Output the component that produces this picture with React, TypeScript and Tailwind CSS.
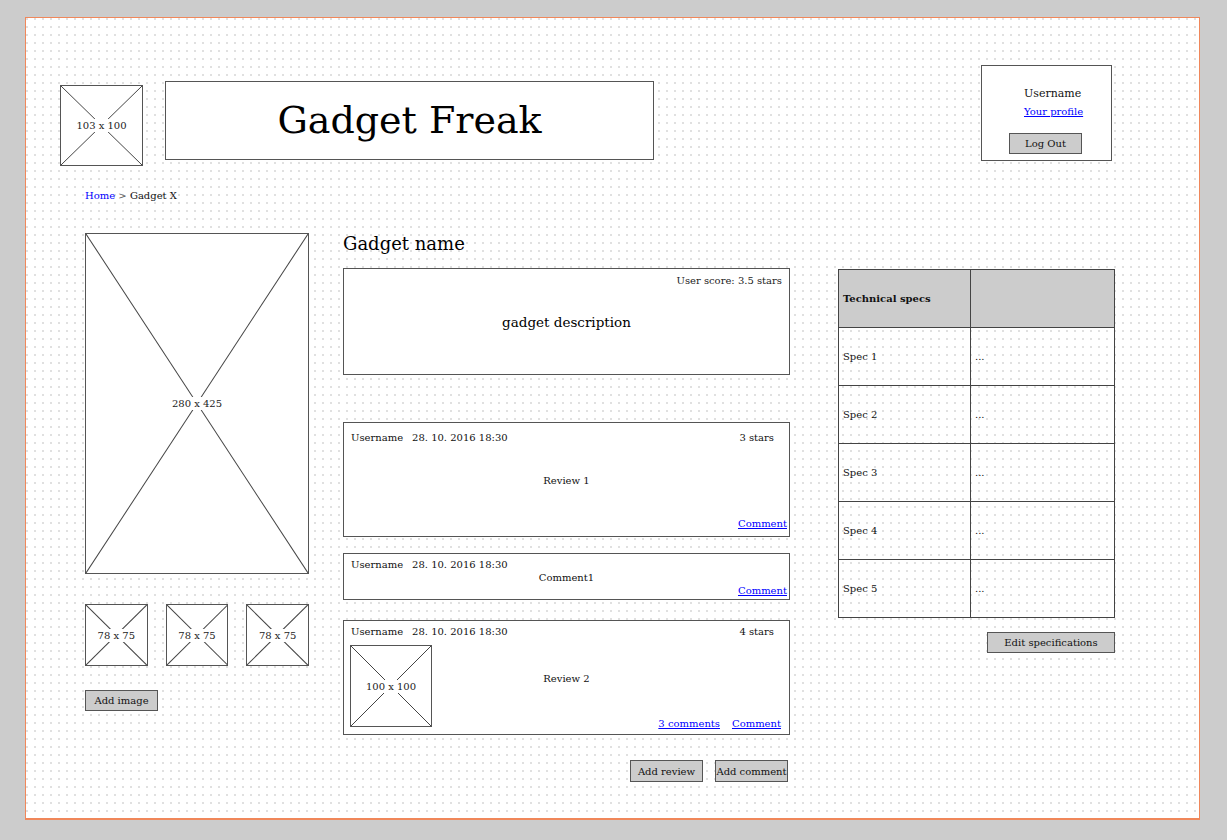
import React from "react";

function Ph({ className, label }: { className: string; label: string }) {
  return (
    <div className={"relative bg-white border border-[#555] flex items-center justify-center " + className}>
      <svg className="absolute inset-0 w-full h-full" viewBox="0 0 100 100" preserveAspectRatio="none">
        <line x1="0" y1="0" x2="100" y2="100" stroke="#444" strokeWidth="1" vectorEffect="non-scaling-stroke" />
        <line x1="100" y1="0" x2="0" y2="100" stroke="#444" strokeWidth="1" vectorEffect="non-scaling-stroke" />
      </svg>
      <span className="relative bg-white px-[2px] text-[10px] leading-[13px] text-[#222]">{label}</span>
    </div>
  );
}

function Btn({ className, children }: { className: string; children: React.ReactNode }) {
  return (
    <div className={"bg-[#cccccc] border border-[#555] flex items-center justify-center text-[10px] text-[#111] " + className}>
      {children}
    </div>
  );
}

function Link({ children }: { children: React.ReactNode }) {
  return <span className="text-[#0000ff] underline">{children}</span>;
}

function Meta() {
  return (
    <span>
      Username<span className="ml-[9px]">28. 10. 2016 18:30</span>
    </span>
  );
}

export default function App() {
  const specs = ["Spec 1", "Spec 2", "Spec 3", "Spec 4", "Spec 5"];
  return (
    <div className="w-[1227px] h-[840px] bg-[#cccccc] pt-[17px] pl-[25px] font-['DejaVu_Serif',serif] text-[#111]">
      <div className="w-[1175px] h-[803px] border border-[#f0875a] border-b-2 bg-white bg-[radial-gradient(circle_at_1px_1px,#e0e0e0_1px,transparent_0)] bg-[length:8px_8px]">
        {/* header */}
        <div className="pt-[47px] flex items-start">
          <Ph className="ml-[34px] mt-[20px] w-[83px] h-[81px]" label="103 x 100" />
          <div className="ml-[22px] mt-[16px] w-[489px] h-[79px] bg-white border border-[#555] flex items-center justify-center text-[38px] text-black">
            Gadget Freak
          </div>
          <div className="ml-auto mr-[87px] w-[131px] h-[96px] bg-white border border-[#555] flex flex-col items-start">
            <div className="pl-[42px] pt-[21px] text-[11px] leading-[14px]">Username</div>
            <div className="pl-[42px] mt-[4px] text-[10px] leading-[13px]">
              <Link>Your profile</Link>
            </div>
            <Btn className="ml-[27px] mt-[15px] w-[73px] h-[21px]">Log Out</Btn>
          </div>
        </div>

        {/* breadcrumb */}
        <div className="mt-[23px] pl-[59px] h-[13px] text-[10px] leading-[13px]">
          <span className="text-[#0000ff]">Home</span> <span className="text-[#555]">&gt;</span> Gadget X
        </div>

        {/* main */}
        <div className="mt-[31px] pl-[59px] flex items-start">
          {/* left */}
          <div className="w-[224px] flex flex-col">
            <Ph className="w-[224px] h-[341px]" label="280 x 425" />
            <div className="mt-[30px] flex gap-[18px]">
              <Ph className="w-[63px] h-[62px]" label="78 x 75" />
              <Ph className="w-[63px] h-[62px]" label="78 x 75" />
              <Ph className="w-[63px] h-[62px]" label="78 x 75" />
            </div>
            <Btn className="mt-[24px] w-[73px] h-[21px]">Add image</Btn>
          </div>

          {/* middle */}
          <div className="ml-[34px] w-[447px] flex flex-col">
            <div className="h-[22px] text-[18px] leading-[22px] text-black">Gadget name</div>
            <div className="mt-[13px] h-[107px] bg-white border border-[#555] flex flex-col">
              <div className="pt-[5px] pr-[7px] text-right text-[10px] leading-[13px] text-[#222]">User score: 3.5 stars</div>
              <div className="flex-1 pb-[16px] flex items-center justify-center text-[13.5px] text-black">gadget description</div>
            </div>

            <div className="mt-[47px] h-[115px] bg-white border border-[#555] flex flex-col text-[10px] leading-[13px]">
              <div className="pt-[8px] pl-[7px] pr-[15px] flex justify-between">
                <Meta />
                <span>3 stars</span>
              </div>
              <div className="flex-1 flex items-center justify-center">Review 1</div>
              <div className="pb-[6px] pr-[2px] flex justify-end">
                <Link>Comment</Link>
              </div>
            </div>

            <div className="mt-[16px] h-[47px] bg-white border border-[#555] flex flex-col text-[10px] leading-[13px]">
              <div className="pt-[4px] pl-[7px]">
                <Meta />
              </div>
              <div className="text-center">Comment1</div>
              <div className="pr-[2px] flex justify-end">
                <Link>Comment</Link>
              </div>
            </div>

            <div className="mt-[20px] h-[115px] bg-white border border-[#555] flex flex-col text-[10px] leading-[13px]">
              <div className="pt-[4px] pl-[7px] pr-[15px] flex justify-between">
                <Meta />
                <span>4 stars</span>
              </div>
              <div className="mt-[7px] pl-[6px] flex items-start">
                <Ph className="w-[82px] h-[82px]" label="100 x 100" />
                <div className="flex-1 flex flex-col">
                  <div className="mt-[27px] pr-[88px] text-center">Review 2</div>
                  <div className="mt-[32px] pr-[8px] flex justify-end gap-[12px]">
                    <Link>3 comments</Link>
                    <Link>Comment</Link>
                  </div>
                </div>
              </div>
            </div>

            <div className="mt-[25px] pr-[2px] flex justify-end gap-[12px]">
              <Btn className="w-[73px] h-[22px]">Add review</Btn>
              <Btn className="w-[73px] h-[22px]">Add comment</Btn>
            </div>
          </div>

          {/* right */}
          <div className="ml-[48px] mt-[36px] w-[277px] flex flex-col">
            <table className="w-[277px] border-collapse text-[10px] leading-[13px]">
              <tbody>
                <tr className="h-[58px] bg-[#cccccc]">
                  <td className="w-[132px] border border-[#444] pl-[4px] font-bold align-middle">Technical specs</td>
                  <td className="border border-[#444]"></td>
                </tr>
                {specs.map((s) => (
                  <tr key={s} className="h-[58px]">
                    <td className="w-[132px] border border-[#444] pl-[4px] align-middle">{s}</td>
                    <td className="border border-[#444] pl-[4px] align-middle">...</td>
                  </tr>
                ))}
              </tbody>
            </table>
            <Btn className="mt-[14px] self-end w-[128px] h-[21px]">Edit specifications</Btn>
          </div>
        </div>
      </div>
    </div>
  );
}
